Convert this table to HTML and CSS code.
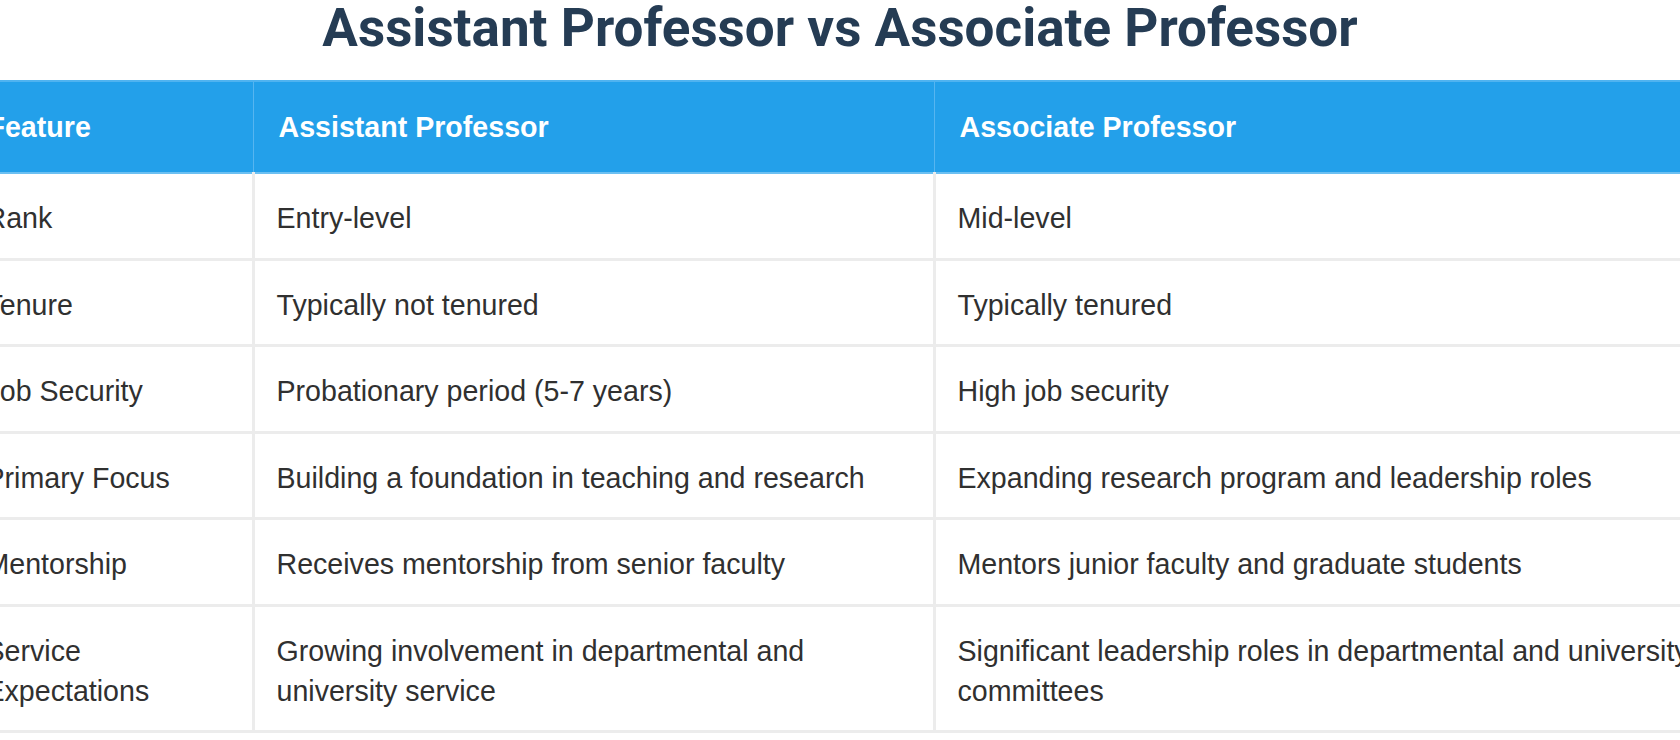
FILE: index.html
```html
<!DOCTYPE html>
<html lang="en">
<head>
<meta charset="utf-8">
<title>Assistant Professor vs Associate Professor</title>
<link rel="stylesheet" href="styles.css">
</head>
<body>
<main class="page">
  <h1 class="title">Assistant Professor vs Associate Professor</h1>
  <div class="table-wrap">
    <table class="compare">
      <colgroup>
        <col class="col-feature">
        <col class="col-assistant">
        <col class="col-associate">
      </colgroup>
      <thead>
        <tr>
          <th>Feature</th>
          <th>Assistant Professor</th>
          <th>Associate Professor</th>
        </tr>
      </thead>
      <tbody>
        <tr>
          <td>Rank</td>
          <td>Entry-level</td>
          <td>Mid-level</td>
        </tr>
        <tr>
          <td>Tenure</td>
          <td>Typically not tenured</td>
          <td>Typically tenured</td>
        </tr>
        <tr>
          <td>Job Security</td>
          <td>Probationary period (5-7 years)</td>
          <td>High job security</td>
        </tr>
        <tr>
          <td>Primary Focus</td>
          <td>Building a foundation in teaching and research</td>
          <td>Expanding research program and leadership roles</td>
        </tr>
        <tr>
          <td>Mentorship</td>
          <td>Receives mentorship from senior faculty</td>
          <td>Mentors junior faculty and graduate students</td>
        </tr>
        <tr>
          <td>Service Expectations</td>
          <td>Growing involvement in departmental and university service</td>
          <td>Significant leadership roles in departmental and university committees</td>
        </tr>
      </tbody>
    </table>
  </div>
</main>
</body>
</html>
```

FILE: styles.css
```css
html, body {
  margin: 0;
  padding: 0;
  background: #ffffff;
}

body {
  width: 1680px;
  height: 740px;
  overflow: hidden;
  font-family: "Liberation Sans", Arial, sans-serif;
  color: #303030;
}

.page {
  display: flex;
  flex-direction: column;
  align-items: center;
}

.title {
  margin: -4px 0 0;
  height: 84px;
  line-height: 64px;
  font-family: Roboto, "Liberation Sans", sans-serif;
  font-weight: 700;
  font-size: 53px;
  color: #253c54;
  text-align: center;
  white-space: nowrap;
}

.table-wrap {
  display: flex;
  justify-content: center;
  width: 1680px;
}

.compare {
  flex: none;
  width: 1756px;
  border-collapse: collapse;
  table-layout: fixed;
  font-size: 28.6px;
  line-height: 40px;
}

.col-feature { width: 291px; }
.col-assistant { width: 681px; }
.col-associate { width: 784px; }

.compare th {
  background: #23a0ea;
  color: #ffffff;
  font-weight: 700;
  text-align: left;
  padding: 25px 24px 25px 25px;
  border-top: 2px solid #4fb3f0;
  border-bottom: 2px solid #6cc0f2;
  border-left: 1px solid #56b5f0;
  border-right: 1px solid #56b5f0;
}

.compare td {
  padding: 24px 24px 19.5px 22px;
  text-align: left;
  vertical-align: middle;
  border: 3px solid #ececec;
  border-top: none;
}
```
